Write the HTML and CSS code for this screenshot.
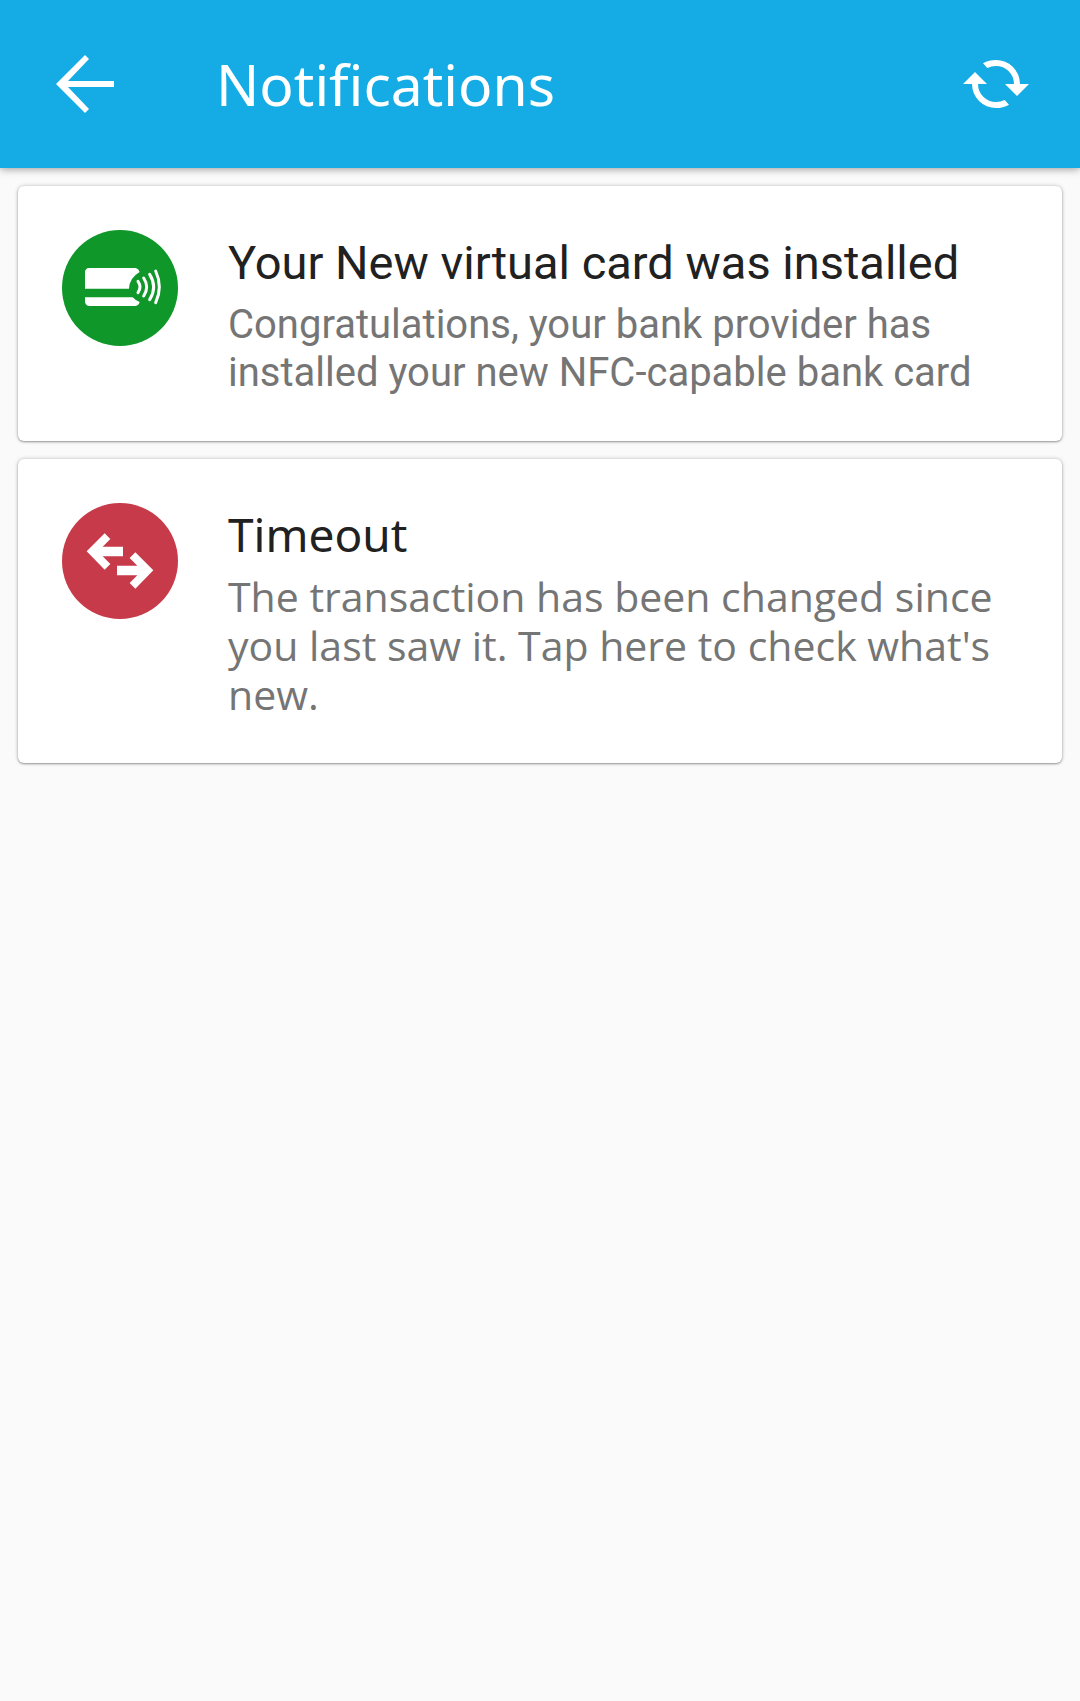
FILE: index.html
```html
<!DOCTYPE html>
<html lang="en">
<head>
<meta charset="utf-8">
<meta name="viewport" content="width=device-width, initial-scale=1">
<title>Notifications</title>
<link rel="stylesheet" href="styles.css">
</head>
<body>
<header class="app-bar">
  <button class="icon-button" type="button" aria-label="Back">
    <svg class="back-icon" viewBox="0 0 58 58" aria-hidden="true"><path d="M29 0 33 4 12 26H58V32H12L33 54 29 58 0 29Z" fill="currentColor"/></svg>
  </button>
  <h1 class="app-title">Notifications</h1>
  <button class="icon-button" type="button" aria-label="Refresh">
    <svg class="refresh-icon" viewBox="69 60 198 144" aria-hidden="true">
      <path fill="currentColor" d="M129 70Q147 60 168 60A72 72 0 0 1 240 132H267L231 168 195 132H222A54 54 0 0 0 168 78Q154 78 142 84ZM69 132 105 96 141 132H114A54 54 0 0 0 168 186Q182 186 194 180L207 194Q189 204 168 204A72 72 0 0 1 96 132Z"/>
    </svg>
  </button>
</header>
<main class="list">
  <article class="card">
    <svg class="badge" viewBox="36 30 348 348" aria-hidden="true">
      <circle cx="210" cy="204" r="174" fill="#0f9729"/>
      <g fill="#fff">
        <path d="M117 144H257Q266 146 269 156 238 174 237 206H105V156Q106 145 117 144Z"/>
        <path d="M105 232H248Q257 242 269 246 266 257 257 258H119Q106 257 105 245Z"/>
      </g>
      <path d="M264 184Q276 201 264 218M281 174Q299 201 281 228M299 163Q323 201 299 239M317 153Q339 201 317 248" fill="none" stroke="#fff" stroke-width="9" stroke-linecap="round"/>
    </svg>
    <div class="message">
      <h2 class="title">Your New virtual card was installed</h2>
      <p class="text">Congratulations, your bank provider has installed your new NFC-capable bank card</p>
    </div>
  </article>
  <article class="card">
    <svg class="badge" viewBox="36 39 348 348" aria-hidden="true">
      <circle cx="210" cy="213" r="174" fill="#c73a49"/>
      <path fill="#fff" d="M110 184 164 130 181 147 158 170H219V199H158L181 222 164 239ZM310 241 256 187 239 204 262 227H201V256H262L239 279 256 296Z"/>
    </svg>
    <div class="message message-alt">
      <h2 class="title">Timeout</h2>
      <p class="text">The transaction has been changed since you last saw it. Tap here to check what's new.</p>
    </div>
  </article>
</main>
</body>
</html>
```
FILE: styles.css
```css
* {
  box-sizing: border-box;
}

body {
  margin: 0;
  background: #fafafa;
  font-family: Roboto, sans-serif;
}

h1,
h2,
p {
  margin: 0;
  font-weight: 400;
}

svg {
  display: block;
}

.app-bar {
  display: flex;
  align-items: center;
  height: 168px;
  padding: 0 51px 0 56px;
  background: #15abe4;
  color: #fff;
  box-shadow: 0 1px 8px rgba(0, 0, 0, 0.4);
}

.icon-button {
  padding: 0;
  border: 0;
  background: none;
  color: inherit;
}

.back-icon {
  width: 58px;
  height: 58px;
}

.refresh-icon {
  width: 66px;
  height: 48px;
}

.app-title {
  flex: 1;
  margin-left: 102px;
  font: 400 57px/80px "Noto Sans", sans-serif;
}

.list {
  display: flex;
  flex-direction: column;
  gap: 18px;
  padding: 18px;
}

.card {
  display: flex;
  align-items: flex-start;
  gap: 50px;
  padding: 44px;
  border-radius: 6px;
  background: #fff;
  box-shadow: 0 1px 2px rgba(0, 0, 0, 0.32), 0 0 4px rgba(0, 0, 0, 0.22);
}

.badge {
  flex: none;
  width: 116px;
  height: 116px;
}

.message {
  flex: 1;
  padding-top: 5px;
}

.title {
  margin-bottom: 10px;
  color: #212121;
  font-size: 47px;
  line-height: 56px;
}

.text {
  color: #757575;
  font-size: 40px;
  line-height: 48px;
}

.message-alt {
  padding-top: 3px;
  font-family: "Noto Sans", sans-serif;
}

.message-alt .title {
  font-size: 46px;
}

.message-alt .text {
  font: 400 41px/49px "Open Sans", sans-serif;
}
```
